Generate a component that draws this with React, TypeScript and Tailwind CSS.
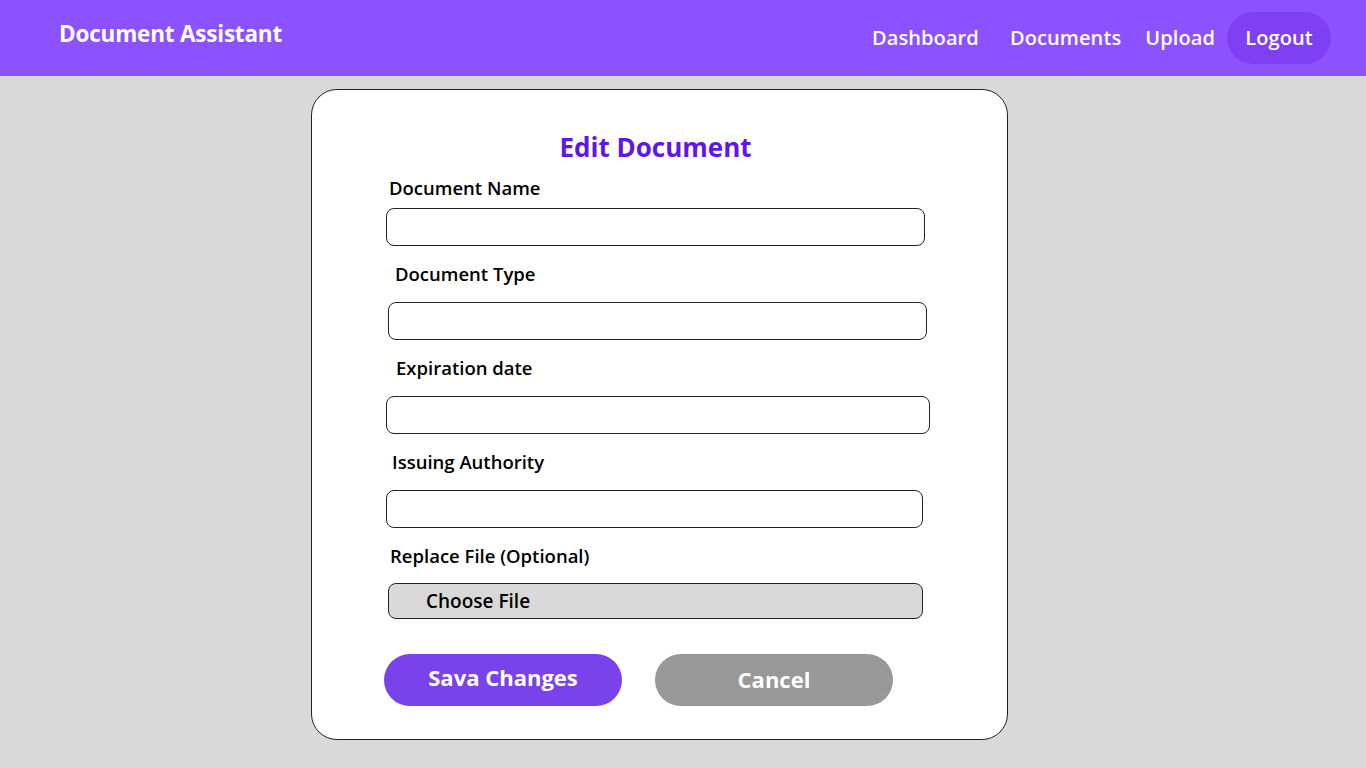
const fields = [
  { label: "Document Name", lx: "ml-[3px]", lt: "mt-[12px]", it: "mt-[8px]", ix: "ml-0", w: "w-[539px]" },
  { label: "Document Type", lx: "ml-[9px]", lt: "mt-[16px]", it: "mt-[16px]", ix: "ml-[2px]", w: "w-[539px]" },
  { label: "Expiration date", lx: "ml-[10px]", lt: "mt-[16px]", it: "mt-[16px]", ix: "ml-0", w: "w-[544px]" },
  { label: "Issuing Authority", lx: "ml-[6px]", lt: "mt-[16px]", it: "mt-[16px]", ix: "ml-0", w: "w-[537px]" },
];

export default function App() {
  return (
    <div
      className="min-h-[768px] bg-[#d9d9d9]"
      style={{ fontFamily: '"Open Sans", "Liberation Sans", sans-serif' }}
    >
      <header className="flex h-[76px] items-center justify-between bg-[#8c52ff] pl-[59px] pr-[35px]">
        <h1 className="-mt-[8px] text-[22.5px] font-bold tracking-[-0.2px] text-white">Document Assistant</h1>
        <nav className="flex items-center text-[20px] font-semibold tracking-[0.1px] text-white">
          <a className="mr-[31px]">Dashboard</a>
          <a className="mr-[24px]">Documents</a>
          <a className="mr-[12px]">Upload</a>
          <a className="flex h-[52px] w-[104px] items-center justify-center rounded-full bg-[#7f40f4]">Logout</a>
        </nav>
      </header>

      <main className="pt-[13px] pb-[28px]">
        <section className="ml-[311px] h-[651px] w-[697px] rounded-[26px] border border-[#222] bg-white pl-[74px] pt-[40px]">
          <h2 className="w-[539px] text-center text-[26px] leading-[34px] font-bold text-[#5e17eb]">Edit Document</h2>

          {fields.map((f) => (
            <div key={f.label}>
              <label className={`${f.lt} ${f.lx} block text-[18.5px] leading-[24px] font-semibold text-black`}>
                {f.label}
              </label>
              <div className={`${f.it} ${f.ix} ${f.w} h-[38px] rounded-[8px] border border-[#222] bg-white`} />
            </div>
          ))}

          <label className="mt-[16px] ml-[4px] block text-[18.5px] leading-[24px] font-semibold text-black">
            Replace File (Optional)
          </label>
          <div className="mt-[15px] ml-[2px] flex h-[36px] w-[535px] items-center rounded-[8px] border border-[#222] bg-[#d9d9d9] pl-[37px] text-[19px] font-semibold text-black">
            Choose File
          </div>

          <div className="mt-[35px] flex">
            <button className="-ml-[2px] h-[52px] w-[238px] rounded-full bg-[#7a42eb] pb-[5px] text-[22px] font-bold text-white">
              Sava Changes
            </button>
            <button className="ml-[33px] h-[52px] w-[238px] rounded-full bg-[#989898] pb-[2px] text-[22px] font-bold text-white">
              Cancel
            </button>
          </div>
        </section>
      </main>
    </div>
  );
}
